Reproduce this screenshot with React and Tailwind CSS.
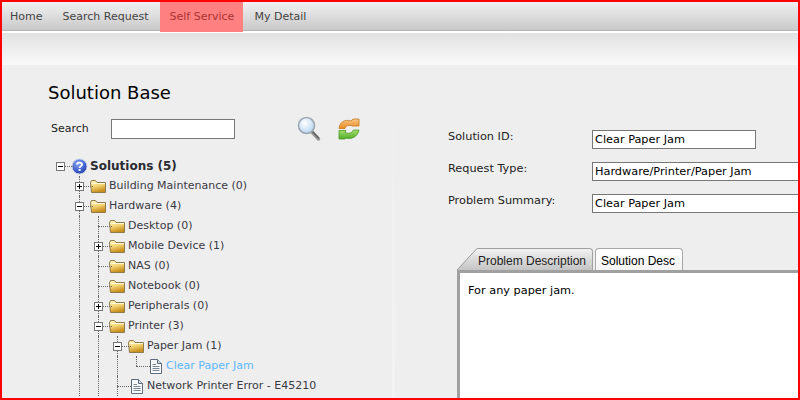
const font = "font-['DejaVu_Sans',sans-serif]";

const Folder = () => (
  <svg width="16" height="13" viewBox="0 0 16 13" className="shrink-0 ml-px">
    <defs>
      <linearGradient id="fold" x1="0" y1="0" x2="0.3" y2="1">
        <stop offset="0" stopColor="#fff6c8" />
        <stop offset="0.5" stopColor="#f5d878" />
        <stop offset="1" stopColor="#c98f1e" />
      </linearGradient>
    </defs>
    <path d="M0.5 3 L1.5 0.5 H5.5 L7 2.5 H15.5 V12.5 H1.5 Z" fill="url(#fold)" stroke="#8f7a4c" strokeWidth="1" />
    <path d="M1.5 3.5 H15" stroke="#fff8d8" strokeWidth="1" />
  </svg>
);

const Doc = () => (
  <svg width="13" height="15" viewBox="0 0 13 15" className="shrink-0 ml-[3px]">
    <path d="M1.5 0.5 H8.5 L12.5 4.5 V14.5 H1.5 Z" fill="#f8f9fb" stroke="#5d6b7c" />
    <path d="M8.5 0.5 V4.5 H12.5" fill="#cfd6df" stroke="#5d6b7c" />
    <path d="M3.5 5.5 H7 M3.5 7.5 H10.5 M3.5 9.5 H10.5 M3.5 11.5 H10.5" stroke="#7a8797" />
  </svg>
);

const Help = () => (
  <svg width="17" height="17" viewBox="0 0 17 17" className="shrink-0 ml-px">
    <defs>
      <radialGradient id="helpBall" cx="0.4" cy="0.3" r="0.8">
        <stop offset="0" stopColor="#8fa8f0" />
        <stop offset="0.6" stopColor="#3f5fd0" />
        <stop offset="1" stopColor="#1d348f" />
      </radialGradient>
    </defs>
    <circle cx="8.5" cy="8.5" r="7.5" fill="url(#helpBall)" stroke="#c9d2ea" />
    <path d="M6 6.5 C6 4 11 4 11 6.6 C11 8.4 8.6 8.2 8.6 10" fill="none" stroke="#fff" strokeWidth="1.8" />
    <rect x="7.6" y="11" width="2" height="2" fill="#fff" />
  </svg>
);

const Magnifier = () => (
  <svg width="24" height="26" viewBox="0 0 24 26">
    <defs>
      <radialGradient id="lens" cx="0.4" cy="0.35" r="0.8">
        <stop offset="0" stopColor="#ffffff" />
        <stop offset="1" stopColor="#a9cdf0" />
      </radialGradient>
    </defs>
    <path d="M14 15 L21.5 23" stroke="#9a9a9a" strokeWidth="3.4" strokeLinecap="round" />
    <path d="M15 15 L21.5 22" stroke="#5d5d5d" strokeWidth="1.4" strokeLinecap="round" />
    <circle cx="9.5" cy="9.5" r="8" fill="url(#lens)" stroke="#9ea7b0" strokeWidth="1.6" />
  </svg>
);

const Refresh = () => (
  <svg width="22" height="22" viewBox="0 0 22 22">
    <defs>
      <linearGradient id="orange" x1="0" y1="0" x2="0" y2="1">
        <stop offset="0" stopColor="#f8c888" />
        <stop offset="1" stopColor="#e98a20" />
      </linearGradient>
      <linearGradient id="green" x1="0" y1="0" x2="0" y2="1">
        <stop offset="0" stopColor="#a8e070" />
        <stop offset="1" stopColor="#4faa28" />
      </linearGradient>
    </defs>
    <path d="M1 10.5 C1.5 4 7 1 13 3 L15 1 L21 1 L21 8 L14.5 8 C11 6.5 8 7.5 7 10.5 Z" fill="url(#orange)" stroke="#c8771c" strokeWidth="0.8" />
    <path d="M1 12.5 H8 L7 14.5 C10.5 16 14 15.5 15.5 12 L21 12 C20 18 14 22 8 20 L7 21 H1 Z" fill="url(#green)" stroke="#4a9a26" strokeWidth="0.8" />
  </svg>
);

// one 19px tree column: guide = vertical dots, branch = horizontal dots too
const Cell = ({ guide, branch, half, toggle }) => (
  <div className="relative w-[19px] h-5 shrink-0">
    {guide && (
      <div className={`absolute left-[9px] top-0 border-l border-dotted border-[#666] ${half ? 'h-[10px]' : 'h-5'}`} />
    )}
    {branch && <div className="absolute left-[9px] top-[10px] w-[14px] border-t border-dotted border-[#666]" />}
    {toggle && (
      <div className="absolute left-[5px] top-[6px] w-[9px] h-[9px] border border-[#777] bg-white flex items-center justify-center">
        <div className="relative w-[5px] h-px bg-black">
          {toggle === 'plus' && <div className="absolute left-[2px] top-[-2px] w-px h-[5px] bg-black" />}
        </div>
      </div>
    )}
  </div>
);

const rows = [
  { guides: [0], toggle: 'minus', icon: 'help', label: 'Solutions (5)', bold: true },
  { guides: [0, 1], toggle: 'plus', icon: 'folder', label: 'Building Maintenance (0)' },
  { guides: [0, 1], toggle: 'minus', icon: 'folder', label: 'Hardware (4)' },
  { guides: [0, 1, 1], icon: 'folder', label: 'Desktop (0)' },
  { guides: [0, 1, 1], toggle: 'plus', icon: 'folder', label: 'Mobile Device (1)' },
  { guides: [0, 1, 1], icon: 'folder', label: 'NAS (0)' },
  { guides: [0, 1, 1], icon: 'folder', label: 'Notebook (0)' },
  { guides: [0, 1, 1], toggle: 'plus', icon: 'folder', label: 'Peripherals (0)' },
  { guides: [0, 1, 1], toggle: 'minus', icon: 'folder', label: 'Printer (3)' },
  { guides: [0, 1, 1, 1], toggle: 'minus', icon: 'folder', label: 'Paper Jam (1)' },
  { guides: [0, 1, 1, 1, 1], half: true, icon: 'doc', label: 'Clear Paper Jam', link: true },
  { guides: [0, 1, 1, 1], icon: 'doc', label: 'Network Printer Error - E45210' },
];

const TreeRow = ({ row }) => {
  const last = row.guides.length - 1;
  let textStyle = 'text-[#3a3a44]';
  if (row.bold) textStyle = 'font-bold text-[12px] text-[#2a2a33]';
  if (row.link) textStyle = 'text-[#5cb8ff]';
  return (
    <div className="flex items-center h-5">
      {row.guides.map((g, i) =>
        i === last ? (
          <Cell key={i} guide={!!g} half={row.half} branch toggle={row.toggle} />
        ) : (
          <Cell key={i} guide={!!g} />
        )
      )}
      <div className="w-5 h-5 shrink-0 flex items-center">
        {row.icon === 'folder' && <Folder />}
        {row.icon === 'doc' && <Doc />}
        {row.icon === 'help' && <Help />}
      </div>
      <span className={`whitespace-nowrap ${textStyle}`}>{row.label}</span>
    </div>
  );
};

const Field = ({ label, value, width }) => (
  <div className="flex h-5 text-[11.3px]">
    <label className="w-[144px] shrink-0 text-[#222] leading-[14px] pt-[2px]">{label}</label>
    <div
      className={`${width} h-[19px] mt-[2px] shrink-0 bg-white border border-[#777] px-[2px] leading-[18px] text-black whitespace-nowrap`}
    >
      {value}
    </div>
  </div>
);

export default function App() {
  return (
    <div className={`${font} w-[800px] h-[400px] overflow-hidden border-2 border-[#ff0000] bg-[#eeeeee] text-[11px] flex flex-col`}>
      <div className="h-[29px] shrink-0 flex bg-gradient-to-b from-[#f1f1f1] to-[#c9c9c9] border-b border-[#b5b5b5] text-[#444] whitespace-nowrap">
        <div className="pl-[8px] pr-[10px] pt-[7px]">Home</div>
        <div className="px-[10px] pt-[7px]">Search Request</div>
        <div className="relative w-[83px] h-[30px] ml-[2px] pl-[9px] pt-[7px] bg-[#ff8080] text-[#a33]">Self Service</div>
        <div className="pl-[11px] pt-[7px]">My Detail</div>
      </div>
      <div className="h-[2px] shrink-0 bg-white" />
      <div className="h-[32px] shrink-0 bg-gradient-to-b from-[#e2e2e2] to-[#f9f9f9]" />
      <div className="flex-1 flex min-h-0">
        <div className="w-[390px] shrink-0 pl-[46px] pt-[17px]">
          <h1 className="text-[18px] leading-[22px] text-black">Solution Base</h1>
          <div className="flex items-center h-[26px] mt-[12px] pl-[3px]">
            <span className="w-[60px] text-[#222]">Search</span>
            <div className="w-[124px] h-[20px] bg-white border border-[#777]" />
            <div className="ml-[62px]">
              <Magnifier />
            </div>
            <div className="ml-[17px]">
              <Refresh />
            </div>
          </div>
          <div className="mt-[14px] pl-[3px]">
            {rows.map((row) => (
              <TreeRow key={row.label} row={row} />
            ))}
          </div>
        </div>
        <div className="w-[3px] shrink-0 bg-gradient-to-b from-[#eeeeee] to-[#f3f3f3] mt-[23px]" />
        <div className="flex-1 min-w-0 pl-[53px] pt-[63px]">
          <div className="flex flex-col gap-3">
            <Field label="Solution ID:" value="Clear Paper Jam" width="w-[164px]" />
            <Field label="Request Type:" value="Hardware/Printer/Paper Jam" width="w-[300px]" />
            <Field label="Problem Summary:" value="Clear Paper Jam" width="w-[300px]" />
          </div>
          <div className="mt-[36px] ml-[9px] w-[400px]">
            <div className="flex items-end h-[22px] font-['Liberation_Sans',sans-serif] text-[12px] text-[#222]">
              <svg width="20" height="22" viewBox="0 0 20 22" className="shrink-0">
                <defs>
                  <linearGradient id="tabFill" x1="0" y1="0" x2="0" y2="1">
                    <stop offset="0" stopColor="#f2f2f2" />
                    <stop offset="1" stopColor="#c4c4c4" />
                  </linearGradient>
                </defs>
                <path d="M0 22 L20 0.5 V22 Z" fill="url(#tabFill)" />
                <path d="M0 22 L20 0.5" stroke="#9a9a9a" fill="none" />
              </svg>
              <div className="w-[116px] h-[22px] pt-[3px] pl-px border-t border-r border-[#a0a0a0] rounded-tr-[4px] bg-gradient-to-b from-[#f2f2f2] to-[#c4c4c4]">
                Problem Description
              </div>
              <div className="w-[88px] h-[22px] ml-[2px] pt-[3px] pl-[5px] border-t border-r border-l border-[#a8a8a8] rounded-t-[4px] bg-gradient-to-b from-[#ffffff] to-[#f4f4f4] text-black">
                Solution Desc
              </div>
            </div>
            <div className="h-[200px] bg-white border-[3px] border-[#a0a0a0] pl-[8px] pt-[10px] text-[11.3px] text-black">
              For any paper jam.
            </div>
          </div>
        </div>
      </div>
    </div>
  );
}
